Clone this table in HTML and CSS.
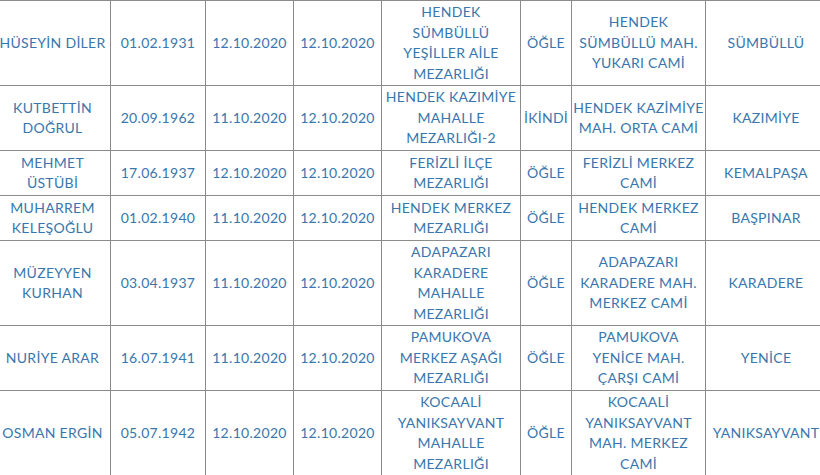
FILE: index.html
```html
<!DOCTYPE html>
<html lang="tr">
<head>
<meta charset="utf-8">
<link rel="stylesheet" href="styles.css">
</head>
<body>
<table class="list">
<colgroup>
<col class="c-name"><col class="c-birth"><col class="c-death"><col class="c-burial"><col class="c-cem"><col class="c-time"><col class="c-mosque"><col class="c-hood">
</colgroup>
<tbody>
<tr class="r4">
<td>HÜSEYİN DİLER</td><td>01.02.1931</td><td>12.10.2020</td><td>12.10.2020</td>
<td>HENDEK<br>SÜMBÜLLÜ<br>YEŞİLLER AİLE<br>MEZARLIĞI</td><td>ÖĞLE</td>
<td>HENDEK<br>SÜMBÜLLÜ MAH.<br>YUKARI CAMİ</td><td>SÜMBÜLLÜ</td>
</tr>
<tr class="r3">
<td>KUTBETTİN<br>DOĞRUL</td><td>20.09.1962</td><td>11.10.2020</td><td>12.10.2020</td>
<td>HENDEK KAZIMİYE<br>MAHALLE<br>MEZARLIĞI-2</td><td>İKİNDİ</td>
<td>HENDEK KAZİMİYE<br>MAH. ORTA CAMİ</td><td>KAZIMİYE</td>
</tr>
<tr class="r2">
<td>MEHMET<br>ÜSTÜBİ</td><td>17.06.1937</td><td>12.10.2020</td><td>12.10.2020</td>
<td>FERİZLİ İLÇE<br>MEZARLIĞI</td><td>ÖĞLE</td>
<td>FERİZLİ MERKEZ<br>CAMİ</td><td>KEMALPAŞA</td>
</tr>
<tr class="r2">
<td>MUHARREM<br>KELEŞOĞLU</td><td>01.02.1940</td><td>11.10.2020</td><td>12.10.2020</td>
<td>HENDEK MERKEZ<br>MEZARLIĞI</td><td>ÖĞLE</td>
<td>HENDEK MERKEZ<br>CAMİ</td><td>BAŞPINAR</td>
</tr>
<tr class="r4">
<td>MÜZEYYEN<br>KURHAN</td><td>03.04.1937</td><td>11.10.2020</td><td>12.10.2020</td>
<td>ADAPAZARI<br>KARADERE<br>MAHALLE<br>MEZARLIĞI</td><td>ÖĞLE</td>
<td>ADAPAZARI<br>KARADERE MAH.<br>MERKEZ CAMİ</td><td>KARADERE</td>
</tr>
<tr class="r3">
<td>NURİYE ARAR</td><td>16.07.1941</td><td>11.10.2020</td><td>12.10.2020</td>
<td>PAMUKOVA<br>MERKEZ AŞAĞI<br>MEZARLIĞI</td><td>ÖĞLE</td>
<td>PAMUKOVA<br>YENİCE MAH.<br>ÇARŞI CAMİ</td><td>YENİCE</td>
</tr>
<tr class="r4">
<td>OSMAN ERGİN</td><td>05.07.1942</td><td>12.10.2020</td><td>12.10.2020</td>
<td>KOCAALİ<br>YANIKSAYVANT<br>MAHALLE<br>MEZARLIĞI</td><td>ÖĞLE</td>
<td>KOCAALİ<br>YANIKSAYVANT<br>MAH. MERKEZ<br>CAMİ</td><td>YANIKSAYVANT</td>
</tr>
</tbody>
</table>
</body>
</html>
```

FILE: styles.css
```css
html, body {
  margin: 0;
  padding: 0;
  background: #ffffff;
  overflow: hidden;
}

.list {
  border-collapse: collapse;
  table-layout: fixed;
  width: 832px;
  margin-left: -6px;
  margin-top: 0;
  font-family: Lato, "Open Sans", sans-serif;
  font-size: 14px;
  letter-spacing: 0.3px;
  line-height: 20.5px;
  color: #3876ad;
}

.c-name { width: 116px; }
.c-birth { width: 95px; }
.c-death { width: 88px; }
.c-burial { width: 88px; }
.c-cem { width: 139px; }
.c-time { width: 51px; }
.c-mosque { width: 134px; }
.c-hood { width: 121px; }

.list td {
  border: 1px solid #8c8c8c;
  padding: 1px 1px;
  text-align: center;
  vertical-align: middle;
  white-space: nowrap;
  overflow: hidden;
}

.r4 td { height: 82px; }
.r3 td { height: 62px; }
.r2 td { height: 42px; }
```
